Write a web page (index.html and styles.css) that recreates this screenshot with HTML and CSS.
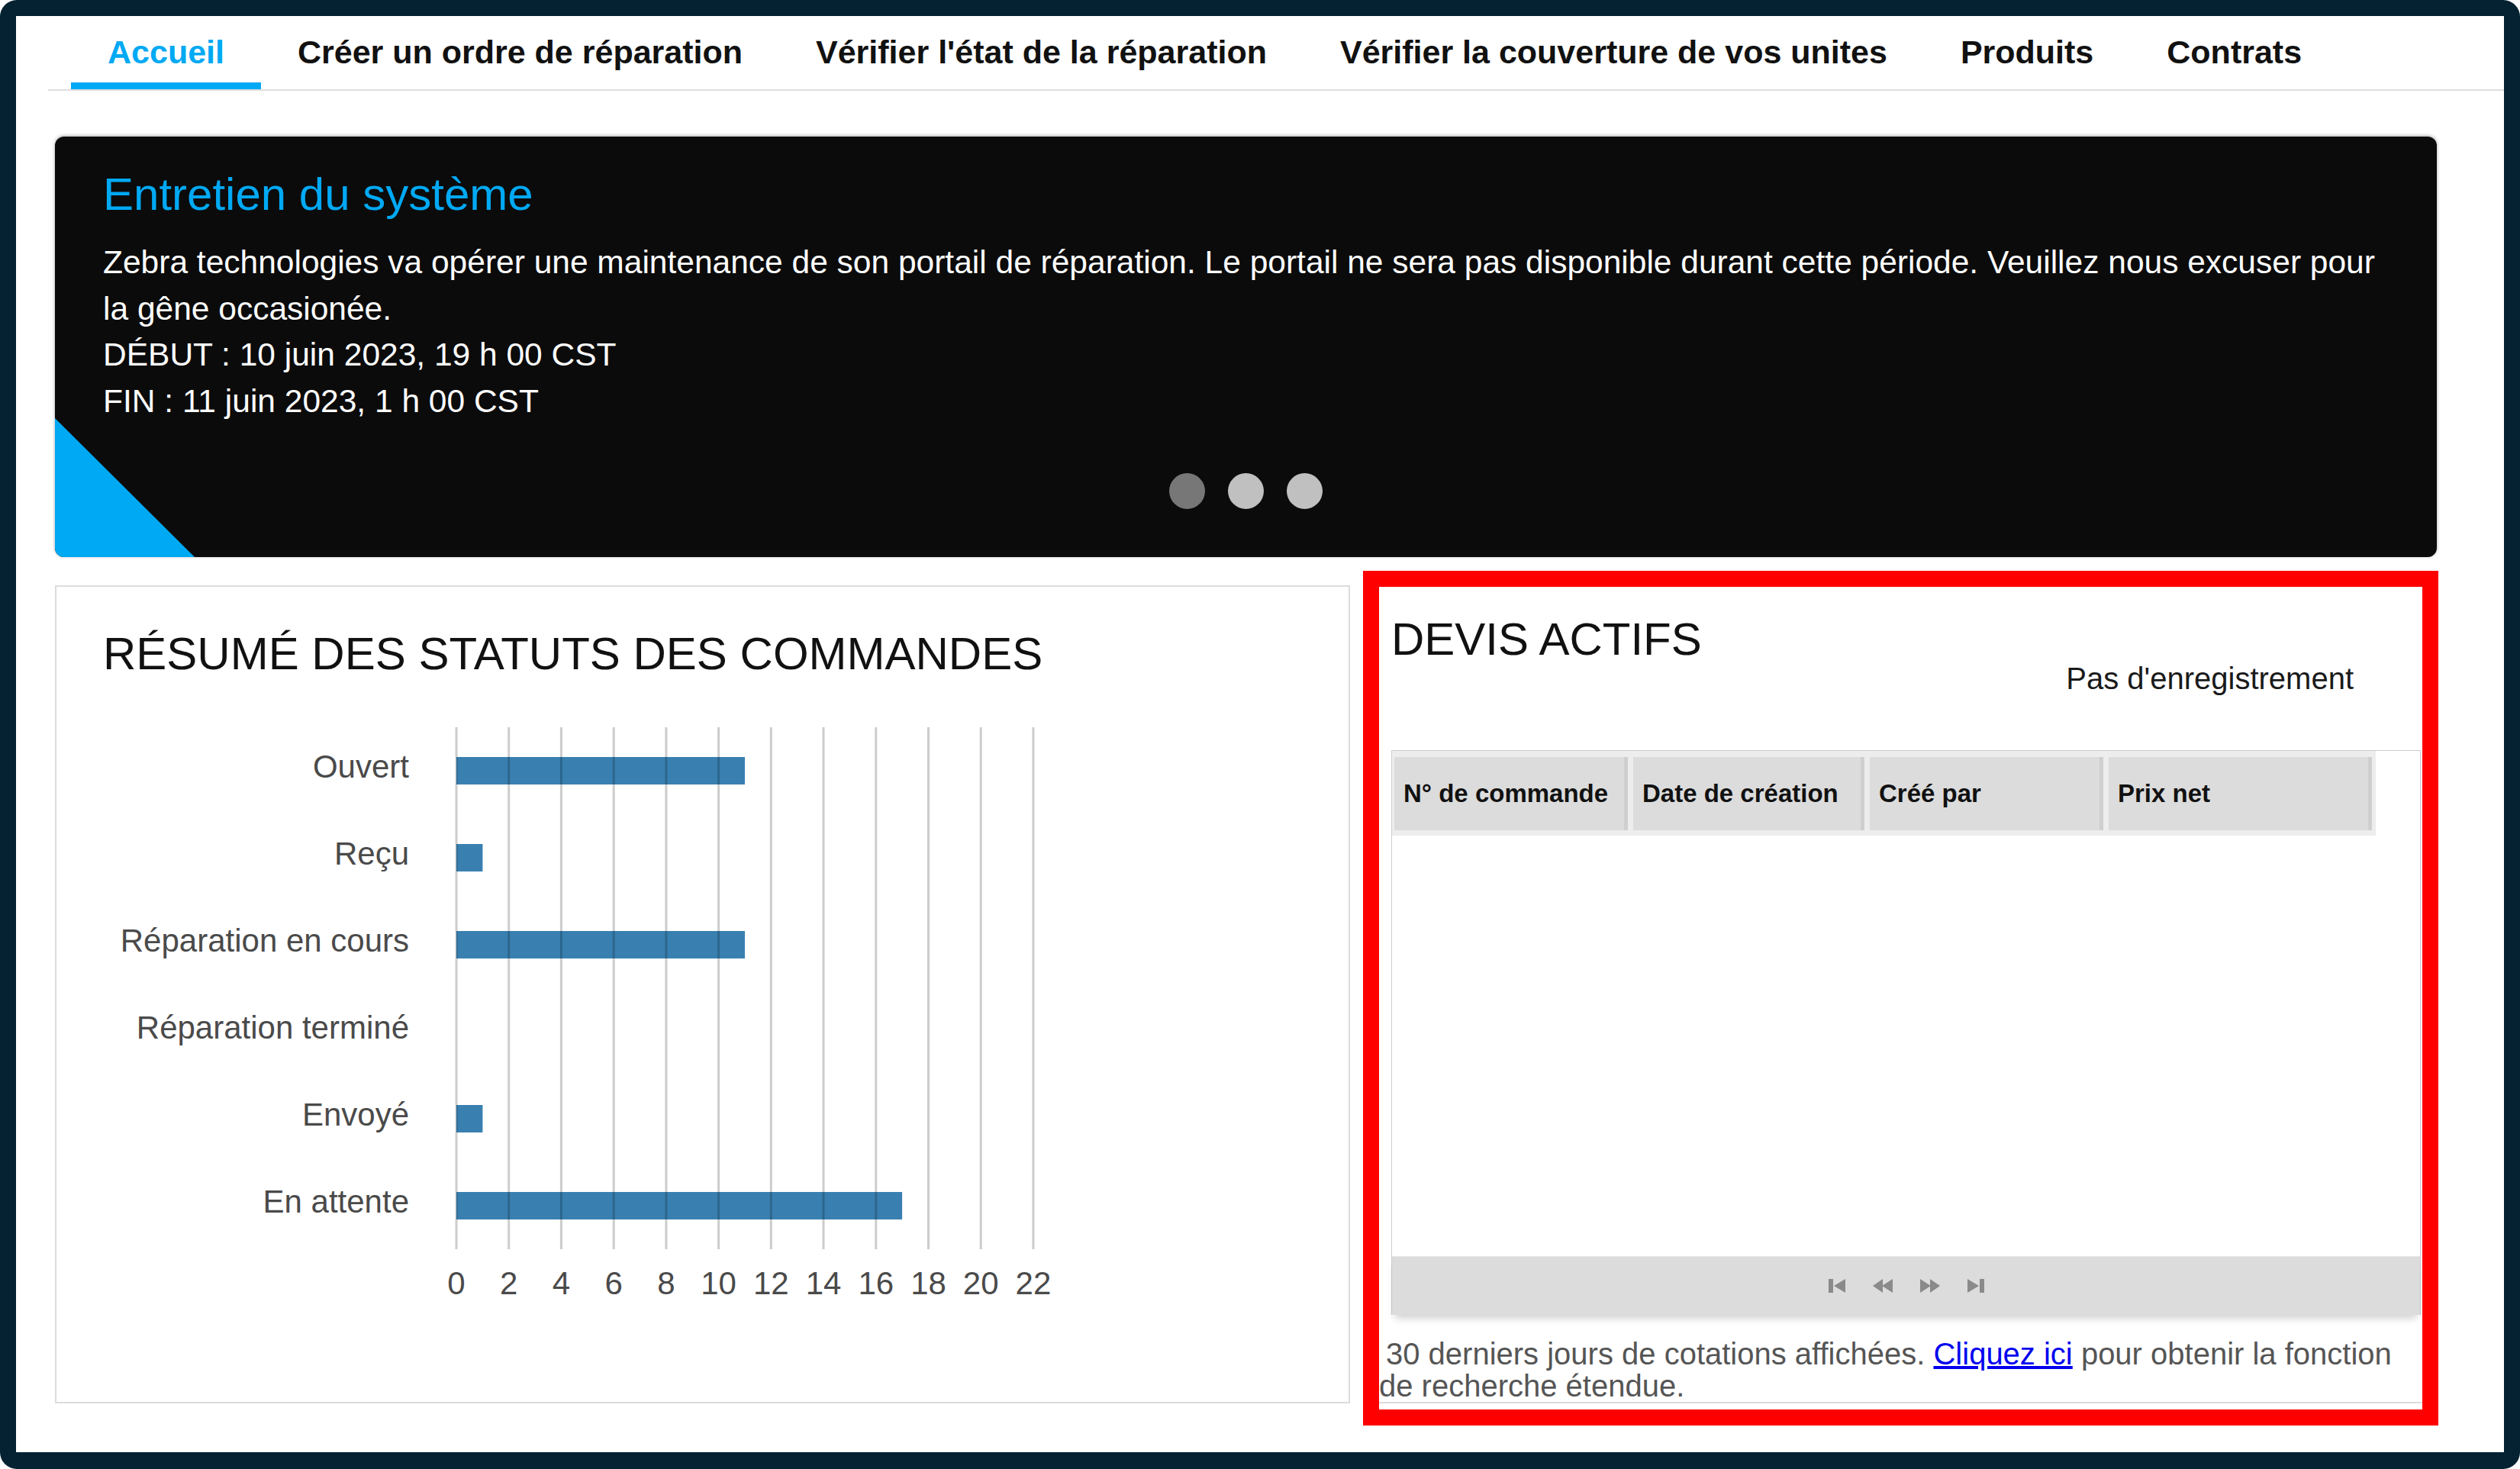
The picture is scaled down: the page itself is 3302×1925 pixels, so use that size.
FILE: index.html
```html
<!DOCTYPE html>
<html lang="fr">

<head>
    <meta charset="UTF-8" />
    <title>Portail de réparation - Accueil</title>
    <link rel="stylesheet" href="styles.css">
</head>

<body>
    <div class="cadre">
        <div class="page">
            <!-- Menu principal -->
            <ul class="menu">
                <li><a href="#" class="actif">Accueil</a></li>
                <li><a href="#">Créer un ordre de réparation</a></li>
                <li><a href="#">Vérifier l'état de la réparation</a></li>
                <li><a href="#">Vérifier la couverture de vos unites</a></li>
                <li><a href="#">Produits</a></li>
                <li><a href="#">Contrats</a></li>
            </ul>

            <div class="contenu">
                <!-- Bannière d'information -->
                <div class="banniere">
                    <h1>Entretien du système</h1>
                    <p>Zebra technologies va opérer une maintenance de son portail de réparation. Le portail ne sera pas disponible durant cette période. Veuillez nous excuser pour la gêne occasionée.<br>
                        DÉBUT : 10 juin 2023, 19 h 00 CST<br>
                        FIN : 11 juin 2023, 1 h 00 CST</p>
                    <div class="points">
                        <span class="point courant"></span>
                        <span class="point"></span>
                        <span class="point"></span>
                    </div>
                </div>

                <div class="panneaux">
                    <!-- Résumé des statuts -->
                    <div class="panneau">
                        <h2 class="titre-resume">RÉSUMÉ DES STATUTS DES COMMANDES</h2>
                        <svg class="graphique" width="1330" height="790" viewBox="0 0 1330 790">
                            <g fill="#3980b1">
                                <rect x="524" y="61" width="378" height="36" />
                                <rect x="524" y="175" width="34.4" height="36" />
                                <rect x="524" y="289" width="378" height="36" />
                                <rect x="524" y="517" width="34.4" height="36" />
                                <rect x="524" y="631" width="584.1" height="36" />
                            </g>
                            <g stroke="rgba(0,0,0,0.2)" stroke-width="3">
                                <line x1="524" y1="22" x2="524" y2="706" />
                                <line x1="592.7" y1="22" x2="592.7" y2="706" />
                                <line x1="661.4" y1="22" x2="661.4" y2="706" />
                                <line x1="730.2" y1="22" x2="730.2" y2="706" />
                                <line x1="798.9" y1="22" x2="798.9" y2="706" />
                                <line x1="867.6" y1="22" x2="867.6" y2="706" />
                                <line x1="936.3" y1="22" x2="936.3" y2="706" />
                                <line x1="1005" y1="22" x2="1005" y2="706" />
                                <line x1="1073.8" y1="22" x2="1073.8" y2="706" />
                                <line x1="1142.5" y1="22" x2="1142.5" y2="706" />
                                <line x1="1211.2" y1="22" x2="1211.2" y2="706" />
                                <line x1="1279.9" y1="22" x2="1279.9" y2="706" />
                            </g>
                            <g class="etiquettes" text-anchor="end">
                                <text x="462" y="88">Ouvert</text>
                                <text x="462" y="202">Reçu</text>
                                <text x="462" y="316">Réparation en cours</text>
                                <text x="462" y="430">Réparation terminé</text>
                                <text x="462" y="544">Envoyé</text>
                                <text x="462" y="658">En attente</text>
                            </g>
                            <g class="etiquettes" text-anchor="middle">
                                <text x="524" y="765">0</text>
                                <text x="592.7" y="765">2</text>
                                <text x="661.4" y="765">4</text>
                                <text x="730.2" y="765">6</text>
                                <text x="798.9" y="765">8</text>
                                <text x="867.6" y="765">10</text>
                                <text x="936.3" y="765">12</text>
                                <text x="1005" y="765">14</text>
                                <text x="1073.8" y="765">16</text>
                                <text x="1142.5" y="765">18</text>
                                <text x="1211.2" y="765">20</text>
                                <text x="1279.9" y="765">22</text>
                            </g>
                        </svg>
                    </div>

                    <!-- Devis actifs -->
                    <div class="panneau panneau-devis">
                        <h2 class="titre-devis">DEVIS ACTIFS</h2>
                        <div class="pas-enreg">Pas d'enregistrement</div>

                        <div class="grille">
                            <div class="entete">
                                <div class="col1">N° de commande</div>
                                <div class="col2">Date de création</div>
                                <div class="col3">Créé par</div>
                                <div class="col4">Prix net</div>
                            </div>
                            <div class="corps"></div>
                            <div class="pagination">
                                <svg width="22" height="20" viewBox="0 0 22 20"><rect x="0" y="1" width="6" height="18" /><polygon points="22,1 22,19 7,10" /></svg>
                                <svg width="26" height="20" viewBox="0 0 26 20"><polygon points="13,1 13,19 0,10" /><polygon points="26,1 26,19 12,10" /></svg>
                                <svg width="26" height="20" viewBox="0 0 26 20"><polygon points="0,1 0,19 14,10" /><polygon points="13,1 13,19 26,10" /></svg>
                                <svg width="22" height="20" viewBox="0 0 22 20"><polygon points="0,1 0,19 15,10" /><rect x="16" y="1" width="6" height="18" /></svg>
                            </div>
                        </div>

                        <p class="note"><span>30 derniers jours de cotations affichées. <a href="#">Cliquez ici</a> pour obtenir la fonction</span><br><span>de recherche étendue.</span></p>

                        <!-- Cadre rouge de mise en évidence -->
                        <div class="surlignage"></div>
                    </div>
                </div>
            </div>
        </div>
    </div>
</body>
</html>
```

FILE: styles.css
```css
/* Styles de la page */
body {
    margin: 0;
    background: #fff;
    font-family: "Liberation Sans", Arial, sans-serif;
}

/* Cadre sombre autour de la page */
.cadre {
    height: 1925px;
    box-sizing: border-box;
    padding: 21px 21px 22px;
    background: #042231;
    border-radius: 22px;
}

.page {
    background: #fff;
    height: 100%;
}

/* Menu principal */
.menu {
    display: flex;
    list-style: none;
    margin: 0 0 0 42px;
    padding: 26px 0 0 30px;
    border-bottom: 2px solid #dedede;
}

.menu a {
    display: block;
    padding: 0 48px 18px;
    font-size: 43px;
    line-height: 43px;
    font-weight: bold;
    color: #111;
    text-decoration: none;
    border-bottom: 9px solid transparent;
}

.menu a.actif {
    color: #00a9f4;
    border-bottom-color: #00a9f4;
}

.contenu {
    padding: 60px 88px 0 51px;
}

/* Bannière */
.banniere {
    position: relative;
    height: 551px;
    box-sizing: border-box;
    padding: 40px 50px 0 63px;
    background: #0b0b0b;
    border-radius: 12px;
    overflow: hidden;
    box-shadow: 0 -1px 4px rgba(0, 0, 0, 0.35);
}

/* Triangle bleu en bas à gauche */
.banniere::before {
    content: "";
    position: absolute;
    left: 0;
    bottom: 0;
    width: 183px;
    height: 182px;
    background: #00a9f4;
    clip-path: polygon(0 0, 0 100%, 100% 100%);
}

.banniere h1 {
    margin: 0;
    font-size: 60px;
    line-height: 72px;
    font-weight: normal;
    color: #00a9f4;
}

.banniere p {
    margin: 23px 0 0;
    font-size: 42.5px;
    line-height: 60.5px;
    color: #fff;
}

.points {
    display: flex;
    justify-content: center;
    gap: 30px;
    margin: 64px 13px 0 0;
}

.point {
    width: 47px;
    height: 47px;
    border-radius: 50%;
    background: #c0c0c0;
}

.point.courant {
    background: #777;
}

/* Panneaux du bas */
.panneaux {
    display: grid;
    grid-template-columns: 1697px 1396px;
    column-gap: 28px;
    margin-top: 37px;
}

.panneau {
    border: 2px solid #dcdcdc;
}

.titre-resume {
    margin: 52px 0 0 61px;
    font-size: 60px;
    line-height: 72px;
    font-weight: normal;
    color: #111;
}

.graphique {
    display: block;
    margin-top: 38px;
}

.etiquettes text {
    font-family: "Liberation Sans", Arial, sans-serif;
    font-size: 42px;
    fill: #4a4a4a;
}

/* Devis actifs */
.panneau-devis {
    position: relative;
    padding: 34px 19px 0 8px;
}

.titre-devis {
    margin: 0 0 0 16px;
    font-size: 60px;
    line-height: 70px;
    font-weight: normal;
    color: #111;
}

.pas-enreg {
    margin-top: -7px;
    padding-right: 88px;
    text-align: right;
    font-size: 40px;
    line-height: 46px;
    color: #1a1a1a;
}

.grille {
    margin: 71px 0 0 16px;
    border: 1px solid #cdcdcd;
    border-bottom: none;
}

.entete {
    display: flex;
    gap: 7px;
    width: 1289px;
    box-sizing: border-box;
    padding: 8px 5px 7px 3px;
    background: #ededed;
}

.entete div {
    display: flex;
    align-items: center;
    height: 96px;
    box-sizing: border-box;
    padding-left: 12px;
    background: #dcdcdc;
    border-right: 5px solid #cfcfcf;
    font-size: 33px;
    font-weight: bold;
    color: #111;
}

.entete .col1 { width: 306px; }
.entete .col2 { width: 303px; }
.entete .col3 { width: 306px; }
.entete .col4 { width: 345px; }

.corps {
    height: 551px;
    background: #fff;
}

.pagination {
    display: flex;
    justify-content: center;
    align-items: center;
    gap: 36px;
    height: 76px;
    border-top: 1px solid #e8e8e8;
    background: #dcdcdc;
    box-shadow: 0 8px 10px -4px rgba(0, 0, 0, 0.2);
}

.pagination svg {
    fill: #8a8a8a;
}

.note {
    margin: 30px 0 0;
    font-size: 40px;
    line-height: 42px;
    color: #555;
    text-indent: 9px;
    white-space: nowrap;
}

.note a {
    color: #0000ee;
}

/* Cadre rouge posé sur le panneau */
.surlignage {
    position: absolute;
    left: -13px;
    top: -21px;
    right: -4px;
    bottom: -31px;
    border: 21px solid #ff0000;
    pointer-events: none;
}
```
